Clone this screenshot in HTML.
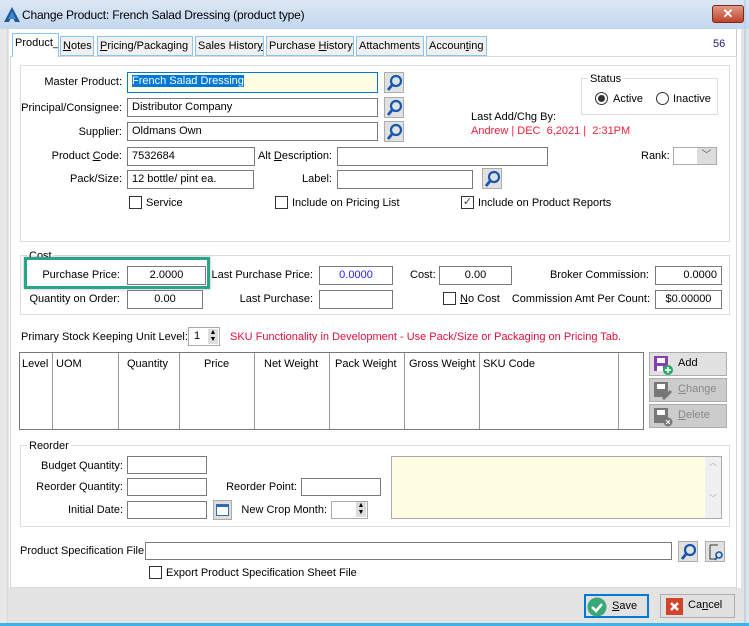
<!DOCTYPE html>
<html><head><style>
*{box-sizing:border-box;margin:0;padding:0}
body{width:749px;height:626px;position:relative;overflow:hidden;background:#e3e3e3;font-family:"Liberation Sans",sans-serif;font-size:11px;color:#000}
.a{position:absolute;white-space:nowrap}
.r{text-align:right}
.in{position:absolute;background:#fff;border:1px solid #7a7a7a;height:19px;padding:1px 4px;line-height:15px;font-size:11px;white-space:nowrap;overflow:hidden}
.grp{position:absolute;border:1px solid #dcdcdc}
.sb{position:absolute;width:20px;height:21px;background:#e1e1e1;border:1px solid #adadad}
.cb{position:absolute;width:13px;height:13px;border:1px solid #333;background:#fff}
.tab{position:absolute;top:36px;height:20px;border:1px solid #8cc4f0;background:#f0f0f0;padding:2px 2px;line-height:15px;font-size:11px;white-space:nowrap;overflow:hidden}
.btn{position:absolute;background:#e1e1e1;border:1px solid #adadad;line-height:21px}
</style></head><body>
<div class="a" style="left:0;top:0;width:749px;height:29px;background:linear-gradient(#dbe7f4,#c3d7ee)"></div>
<svg class="a" style="left:4px;top:7px" width="16" height="15"><polygon points="8,0 16,15 11,15 8,9 5,15 0,15" fill="#1e5a9a"/><polygon points="8,4 12,12 4,12" fill="#3c86c6"/></svg>
<div class="a" style="left:22px;top:8px;font-size:12px;letter-spacing:-0.2px">Change Product: French Salad Dressing (product type)</div>
<div class="a" style="left:712px;top:5px;width:32px;height:18px;background:linear-gradient(#e09a88,#c0432b);border:1px solid #7c2a1c;border-radius:3px;color:#fff;text-align:center;font-weight:bold;font-size:13px;line-height:16px">✕</div>
<div class="a" style="left:0;top:29px;width:8px;height:597px;background:#e8e8e8;border-right:1px solid #d8d8d8"></div>
<div class="a" style="left:9px;top:29px;width:732px;height:559px;background:#fff"></div>
<div class="a" style="left:736px;top:29px;width:1px;height:560px;background:#ccc"></div>
<div class="a" style="left:744px;top:0;width:2px;height:626px;background:#bcd3ea"></div>
<div class="a" style="left:0;top:623px;width:749px;height:3px;background:#3db2e8"></div>
<div class="a" style="left:10px;top:56px;width:727px;height:532px;border:1px solid #d9d9d9;background:#fff"></div>
<div class="tab" style="left:12px;top:33px;height:24px;background:#fff;width:47px;border-bottom:none">Product_</div>
<div class="tab" style="left:60px;width:34px"><u>N</u>otes</div>
<div class="tab" style="left:97px;width:96px"><u>P</u>ricing/Packaging</div>
<div class="tab" style="left:195px;width:69px">Sales Histor<u>y</u></div>
<div class="tab" style="left:266px;width:88px">Purchase <u>H</u>istory</div>
<div class="tab" style="left:356px;width:68px">Attachments</div>
<div class="tab" style="left:426px;width:61px">Accoun<u>t</u>ing</div>
<div class="a" style="left:713px;top:38px;color:#202080">56</div>
<div class="grp" style="left:20px;top:65px;width:710px;height:177px"></div>
<div class="a r" style="left:20px;width:102px;top:76px">Master Product:</div>
<div class="in" style="left:127px;top:72px;width:251px;height:21px;background:#fffde3;border-color:#0078d7"><span style="background:#0078d7;color:#fff">French Salad Dressing</span></div>
<div class="a r" style="left:20px;width:102px;top:102px">Principal/Consignee:</div>
<div class="in" style="left:127px;top:98px;width:251px">Distributor Company</div>
<div class="a r" style="left:20px;width:102px;top:126px">Supplier:</div>
<div class="in" style="left:127px;top:122px;width:251px">Oldmans Own</div>
<div class="a r" style="left:20px;width:102px;top:150px">Product <u>C</u>ode:</div>
<div class="in" style="left:127px;top:147px;width:128px">7532684</div>
<div class="a r" style="left:240px;width:92px;top:150px">Alt <u>D</u>escription:</div>
<div class="in" style="left:337px;top:147px;width:211px"></div>
<div class="a" style="left:641px;top:150px">Rank:</div>
<div class="in" style="left:673px;top:147px;width:44px;height:18px;border-color:#aaa"></div>
<div class="a" style="left:697px;top:148px;width:19px;height:16px;background:#ddd;color:#555;text-align:center;font-size:10px;line-height:16px">﹀</div>
<div class="a r" style="left:20px;width:102px;top:173px">Pack/Size:</div>
<div class="in" style="left:127px;top:170px;width:127px">12 bottle/ pint ea.</div>
<div class="a r" style="left:240px;width:92px;top:173px">Label:</div>
<div class="in" style="left:337px;top:170px;width:136px"></div>
<div class="cb" style="left:129px;top:196px"></div><div class="a" style="left:146px;top:197px">Service</div>
<div class="cb" style="left:275px;top:196px"></div><div class="a" style="left:292px;top:197px">Include on Pricing List</div>
<div class="cb" style="left:461px;top:196px;font-size:11px;line-height:10px;color:#444;text-align:center">✓</div><div class="a" style="left:478px;top:197px">Include on Product Reports</div>
<div class="grp" style="left:581px;top:78px;width:137px;height:37px"></div>
<div class="a" style="left:588px;top:73px;background:#fff;padding:0 2px">Status</div>
<div class="a" style="left:595px;top:92px;width:13px;height:13px;border:1px solid #333;border-radius:50%"><div style="margin:2px;width:7px;height:7px;border-radius:50%;background:#333"></div></div>
<div class="a" style="left:613px;top:93px">Active</div>
<div class="a" style="left:656px;top:92px;width:13px;height:13px;border:1px solid #333;border-radius:50%"></div>
<div class="a" style="left:673px;top:93px">Inactive</div>
<div class="a" style="left:471px;top:111px">Last Add/Chg By:</div>
<div class="a" style="left:471px;top:125px;color:#f0203a">Andrew | DEC&nbsp; 6,2021 |&nbsp; 2:31PM</div>
<div class="grp" style="left:20px;top:255px;width:710px;height:60px"></div>
<div class="a" style="left:27px;top:250px;background:#fff;padding:0 2px">Cost</div>
<div class="a" style="left:24px;top:257px;width:186px;height:32px;border:3px solid #26a589;box-shadow:0 0 3px rgba(0,0,0,.3)"></div>
<div class="a r" style="left:20px;width:100px;top:269px">Purchase Price:</div>
<div class="in" style="left:127px;top:266px;width:79px;text-align:center">2.0000</div>
<div class="a r" style="left:200px;width:113px;top:269px">Last Purchase Price:</div>
<div class="in" style="left:319px;top:266px;width:74px;text-align:center;color:#2020ff">0.0000</div>
<div class="a" style="left:410px;top:269px">Cost:</div>
<div class="in" style="left:439px;top:266px;width:73px;text-align:center">0.00</div>
<div class="a r" style="left:500px;width:149px;top:269px">Broker Commission:</div>
<div class="in" style="left:655px;top:266px;width:67px;text-align:right">0.0000</div>
<div class="a r" style="left:20px;width:100px;top:293px">Quantity on Order:</div>
<div class="in" style="left:127px;top:290px;width:76px;text-align:center">0.00</div>
<div class="a r" style="left:200px;width:113px;top:293px">Last Purchase:</div>
<div class="in" style="left:319px;top:290px;width:74px"></div>
<div class="cb" style="left:443px;top:292px"></div><div class="a" style="left:460px;top:293px"><u>N</u>o Cost</div>
<div class="a r" style="left:500px;width:150px;top:293px">Commission Amt Per Count:</div>
<div class="in" style="left:655px;top:290px;width:67px;text-align:center">$0.00000</div>
<div class="a" style="left:21px;top:331px">Primary Stock Keeping Unit Level:</div>
<div class="in" style="left:188px;top:327px;width:32px;height:19px;border-color:#aaa;padding:1px 5px">1</div>
<div class="a" style="left:208px;top:329px;width:10px;height:15px;background:#ddd;font-size:7px;line-height:7px;text-align:center">▲<br>▼</div>
<div class="a" style="left:230px;top:331px;color:#e0103a">SKU Functionality in Development - Use Pack/Size or Packaging on Pricing Tab.</div>
<div class="a" style="left:19px;top:352px;width:625px;height:78px;border:1px solid #777"></div>
<div class="a" style="left:52px;top:353px;width:1px;height:76px;background:#999"></div>
<div class="a" style="left:118px;top:353px;width:1px;height:76px;background:#999"></div>
<div class="a" style="left:179px;top:353px;width:1px;height:76px;background:#999"></div>
<div class="a" style="left:254px;top:353px;width:1px;height:76px;background:#999"></div>
<div class="a" style="left:329px;top:353px;width:1px;height:76px;background:#999"></div>
<div class="a" style="left:404px;top:353px;width:1px;height:76px;background:#999"></div>
<div class="a" style="left:479px;top:353px;width:1px;height:76px;background:#999"></div>
<div class="a" style="left:618px;top:353px;width:1px;height:76px;background:#999"></div>
<div class="a" style="left:22px;top:358px">Level</div>
<div class="a" style="left:56px;top:358px">UOM</div>
<div class="a" style="left:127px;top:358px">Quantity</div>
<div class="a" style="left:204px;top:358px">Price</div>
<div class="a" style="left:264px;top:358px">Net Weight</div>
<div class="a" style="left:335px;top:358px">Pack Weight</div>
<div class="a" style="left:409px;top:358px">Gross Weight</div>
<div class="a" style="left:483px;top:358px">SKU Code</div>
<div class="btn" style="left:649px;top:352px;width:78px;height:24px"><svg class="a" style="left:3px;top:2px" width="20" height="20"><rect x="1" y="1" width="14" height="15" fill="#8a3fb0"/><rect x="4" y="3" width="8" height="5" fill="#fff"/><rect x="4" y="11" width="6" height="5" fill="#fff"/><circle cx="15" cy="15" r="5" fill="#2aa866"/><path d="M15 12v6M12 15h6" stroke="#fff" stroke-width="1.5"/></svg><span class="a" style="left:28px;top:0">Add</span></div>
<div class="btn" style="left:649px;top:378px;width:78px;height:24px;background:#ccc;color:#888"><svg class="a" style="left:3px;top:2px" width="20" height="20"><rect x="1" y="1" width="14" height="15" fill="#777"/><rect x="4" y="3" width="8" height="5" fill="#fff"/><path d="M10 18l8-8" stroke="#777" stroke-width="3"/></svg><span class="a" style="left:28px;top:0"><u>C</u>hange</span></div>
<div class="btn" style="left:649px;top:404px;width:78px;height:24px;background:#ccc;color:#888"><svg class="a" style="left:3px;top:2px" width="20" height="20"><rect x="1" y="1" width="14" height="15" fill="#777"/><rect x="4" y="3" width="8" height="5" fill="#fff"/><circle cx="15" cy="15" r="4.5" fill="#777"/><path d="M13 13l4 4M17 13l-4 4" stroke="#fff"/></svg><span class="a" style="left:28px;top:0"><u>D</u>elete</span></div>
<div class="grp" style="left:20px;top:445px;width:710px;height:82px"></div>
<div class="a" style="left:27px;top:440px;background:#fff;padding:0 2px">Reorder</div>
<div class="a r" style="left:20px;width:103px;top:460px">Budget Quantity:</div>
<div class="in" style="left:127px;top:456px;width:80px;height:18px"></div>
<div class="a r" style="left:20px;width:103px;top:481px">Reorder Quantity:</div>
<div class="in" style="left:127px;top:478px;width:80px;height:18px"></div>
<div class="a r" style="left:200px;width:97px;top:481px">Reorder Point:</div>
<div class="in" style="left:301px;top:478px;width:80px;height:18px"></div>
<div class="a r" style="left:20px;width:103px;top:504px">Initial Date:</div>
<div class="in" style="left:127px;top:501px;width:80px;height:18px"></div>
<div class="a" style="left:213px;top:500px;width:19px;height:20px;background:#ddd;border:1px solid #aaa"><div style="margin:3px 2px;width:13px;height:12px;border:1px solid #2c6cb0;border-top:3px solid #2c6cb0;background:#fff"></div></div>
<div class="a r" style="left:230px;width:97px;top:504px">New Crop Month:</div>
<div class="in" style="left:331px;top:501px;width:37px;height:18px;border-color:#aaa"></div>
<div class="a" style="left:356px;top:502px;width:10px;height:15px;background:#ddd;font-size:7px;line-height:7px;text-align:center">▲<br>▼</div>
<div class="a" style="left:391px;top:456px;width:331px;height:63px;background:#fffde3;border:1px solid #aaa"></div>
<div class="a" style="left:705px;top:457px;width:16px;height:61px;background:#f0f0f0;color:#aaa;font-size:8px;text-align:center;line-height:12px">︿<br><br><br>﹀</div>
<div class="a" style="left:20px;top:545px">Product Specification File:</div>
<div class="in" style="left:145px;top:542px;width:527px;height:18px"></div>
<div class="cb" style="left:149px;top:566px"></div>
<div class="a" style="left:166px;top:567px">Export Product Specification Sheet File</div>
<svg width="0" height="0" style="position:absolute"><defs><g id="mg"><circle cx="11" cy="8" r="5" fill="none" stroke="#1657b0" stroke-width="2.2"/><path d="M7.5 11.5L3 17" stroke="#1657b0" stroke-width="2.8"/></g></defs></svg>
<div class="sb" style="left:384px;top:72px"><svg width="20" height="20"><use href="#mg"/></svg></div>
<div class="sb" style="left:384px;top:97px"><svg width="20" height="20"><use href="#mg"/></svg></div>
<div class="sb" style="left:384px;top:121px"><svg width="20" height="20"><use href="#mg"/></svg></div>
<div class="sb" style="left:482px;top:168px"><svg width="20" height="20"><use href="#mg"/></svg></div>
<div class="sb" style="left:678px;top:541px"><svg width="20" height="20"><use href="#mg"/></svg></div>
<div class="sb" style="left:705px;top:541px"><svg width="20" height="20"><path d="M4 3h8M4 3v14h5" stroke="#333" fill="none"/><circle cx="13" cy="13" r="3" fill="none" stroke="#1657b0" stroke-width="1.6"/><path d="M11 15l-2 3" stroke="#1657b0" stroke-width="1.8"/></svg></div>
<div class="btn" style="left:584px;top:594px;width:65px;height:24px;border:2px solid #0078d7;line-height:20px"><svg class="a" style="left:1px;top:1px" width="20" height="20"><circle cx="10" cy="10" r="9.5" fill="#3aa776"/><path d="M5 10l4 4 6-7" stroke="#fff" stroke-width="2.5" fill="none"/></svg><span class="a" style="left:26px;top:0"><u>S</u>ave</span></div>
<div class="btn" style="left:660px;top:594px;width:75px;height:24px"><svg class="a" style="left:5px;top:3px" width="18" height="18"><rect width="17" height="17" fill="#d2432b"/><path d="M5 5l7 7M12 5l-7 7" stroke="#fff" stroke-width="2.5"/></svg><span class="a" style="left:27px;top:0">Ca<u>n</u>cel</span></div>
</body></html>
